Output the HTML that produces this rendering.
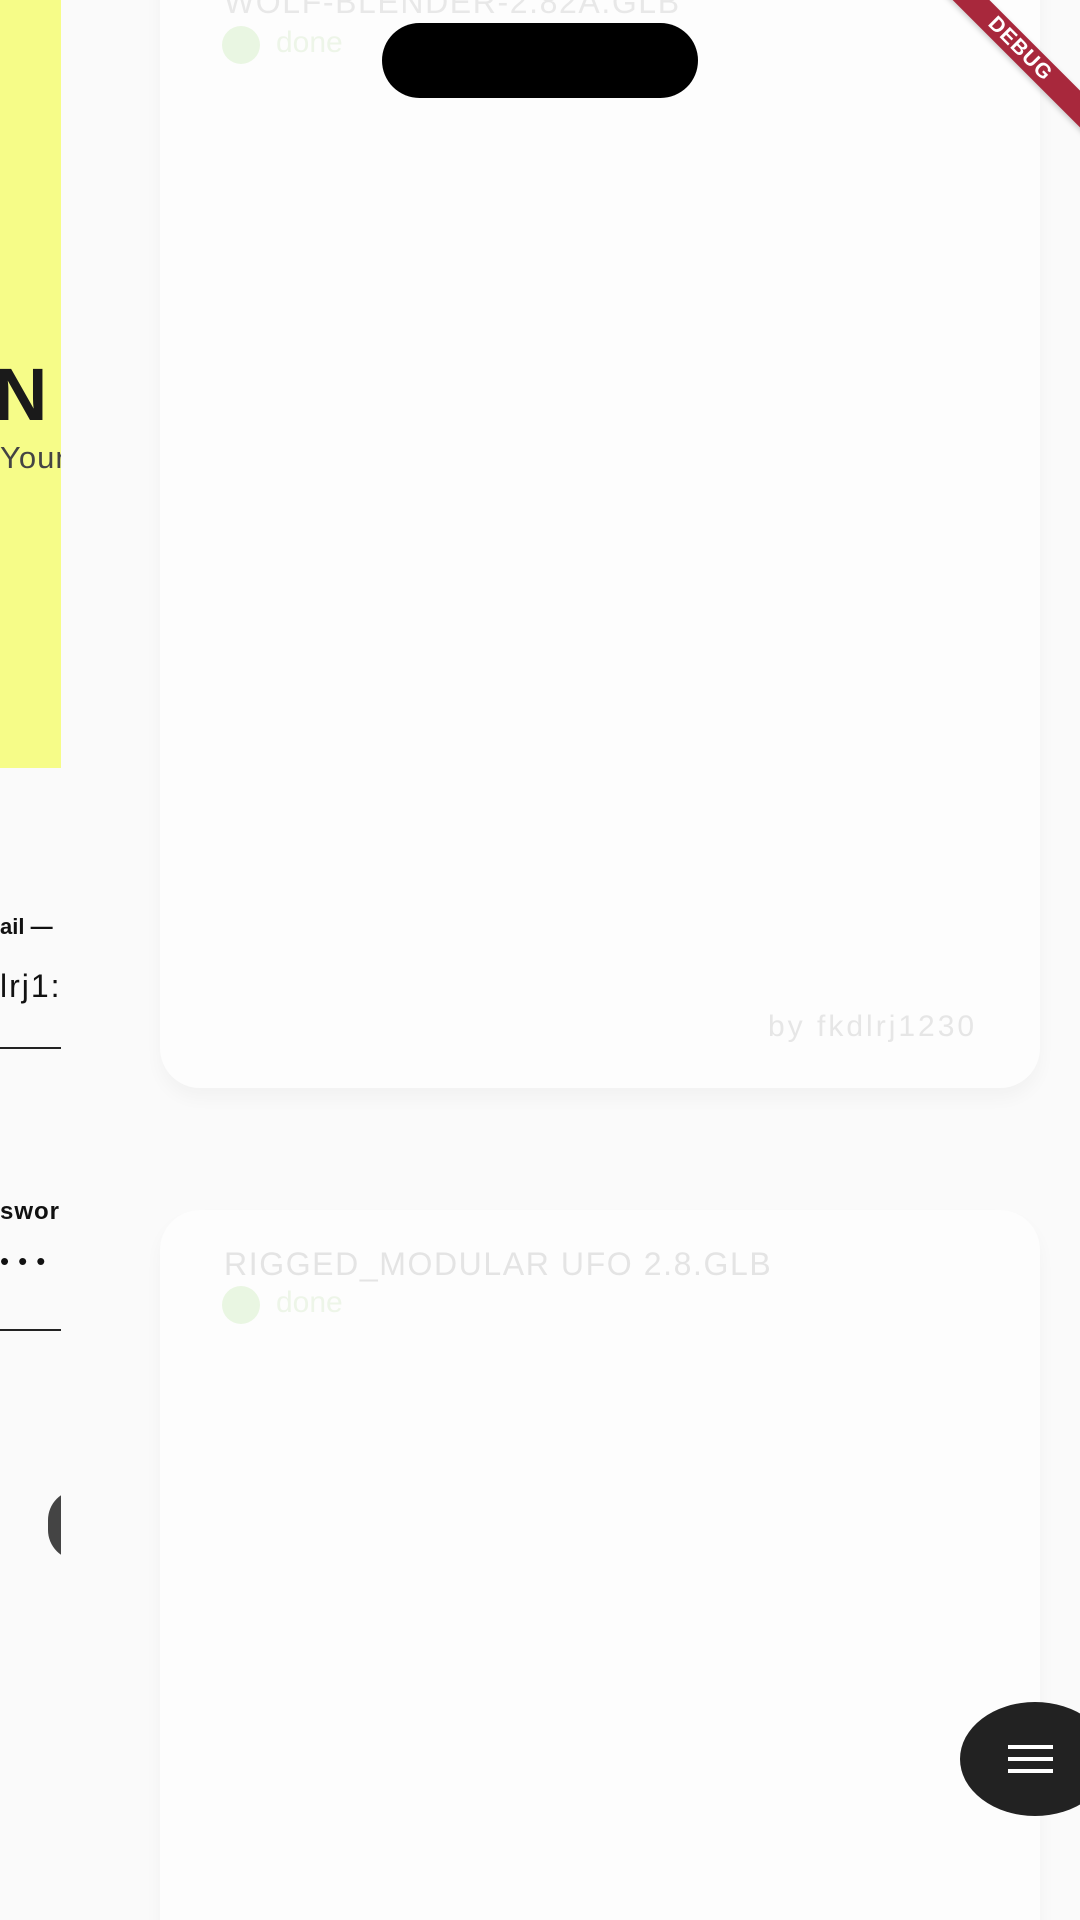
<!DOCTYPE html>
<html><head><meta charset="utf-8"><style>
html,body{margin:0;padding:0;width:1080px;height:1920px;overflow:hidden;background:#fafafa;font-family:"Liberation Sans",sans-serif;position:relative}
.a{position:absolute}
.card{position:absolute;left:160px;width:880px;background:#fdfdfd;border-radius:40px;box-shadow:0 10px 18px rgba(0,0,0,0.035)}
.t{color:#e8e8e8;font-size:32px;letter-spacing:1.6px;white-space:nowrap}
.d{color:#edf5e8;font-size:30px}
.dot{width:38px;height:38px;border-radius:50%;background:#e9f6e2}
</style></head><body>
<div class="card" style="top:-60px;height:1148px"></div>
<div class="a t" style="left:224px;top:-16px">WOLF-BLENDER-2.82A.GLB</div>
<div class="a dot" style="left:222px;top:26px"></div>
<div class="a d" style="left:276px;top:26px">done</div>
<div class="a" style="left:768px;top:1010px;color:#e6e6e6;font-size:30px;letter-spacing:3px">by fkdlrj1230</div>

<div class="card" style="top:1210px;height:760px"></div>
<div class="a t" style="left:224px;top:1246px;color:#e4e4e4">RIGGED_MODULAR UFO 2.8.GLB</div>
<div class="a dot" style="left:222px;top:1286px"></div>
<div class="a d" style="left:276px;top:1286px">done</div>

<!-- left partial screen -->
<div class="a" style="left:0;top:0;width:61px;height:768px;background:#f6fc88"></div>
<div class="a" style="left:-6px;top:352px;font-size:74px;font-weight:bold;color:#1a1a1a">N</div>
<div class="a" style="left:0;top:440px;width:61px;overflow:hidden;font-size:31px;color:#444;white-space:nowrap;letter-spacing:1px">Your</div>
<div class="a" style="left:0;top:914px;width:61px;overflow:hidden;font-size:22px;font-weight:bold;color:#111;white-space:nowrap">ail —</div>
<div class="a" style="left:0;top:968px;width:61px;overflow:hidden;font-size:32px;color:#111;white-space:nowrap;letter-spacing:2px">lrj1:</div>
<div class="a" style="left:0;top:1047px;width:61px;height:2px;background:#222"></div>
<div class="a" style="left:0;top:1198px;width:61px;overflow:hidden;font-size:24px;font-weight:bold;color:#111;white-space:nowrap;letter-spacing:1px">swor</div>
<div class="a" style="left:0;top:1246px;width:61px;overflow:hidden;font-size:26px;color:#111;white-space:nowrap;letter-spacing:9px">•••</div>
<div class="a" style="left:0;top:1329px;width:61px;height:2px;background:#222"></div>
<div class="a" style="left:0;top:1470px;width:61px;height:110px;overflow:hidden"><div class="a" style="left:48px;top:20px;width:60px;height:70px;border-radius:30px;background:#444"></div></div>

<!-- pill -->
<div class="a" style="left:382px;top:23px;width:316px;height:75px;border-radius:38px;background:#000"></div>

<!-- FAB -->
<div class="a" style="left:960px;top:1702px;width:150px;height:114px;border-radius:50%;background:#222"></div>
<div class="a" style="left:1008px;top:1745px;width:45px;height:4px;background:#fff"></div>
<div class="a" style="left:1008px;top:1757px;width:45px;height:4px;background:#fff"></div>
<div class="a" style="left:1008px;top:1769px;width:45px;height:4px;background:#fff"></div>

<!-- debug banner -->
<div class="a" style="left:900px;top:36px;width:240px;height:26px;background:#a8283c;transform:rotate(45deg);color:#fff;font-weight:bold;font-size:21px;text-align:center;line-height:26px;letter-spacing:1px;box-shadow:0 2px 6px rgba(0,0,0,0.2)">DEBUG</div>
</body></html>
